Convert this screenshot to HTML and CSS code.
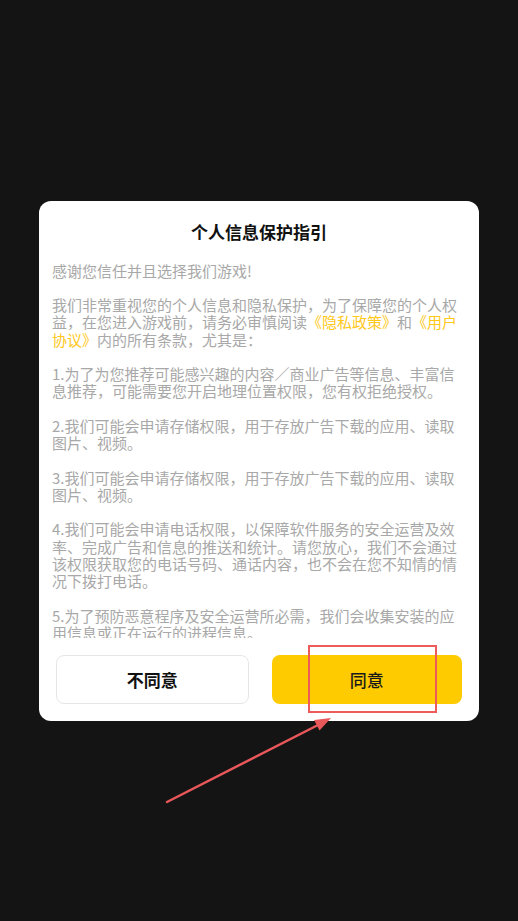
FILE: index.html
```html
<!DOCTYPE html>
<html lang="zh-CN">
<head>
    <meta charset="utf-8">
    <title>个人信息保护指引</title>
    <link rel="stylesheet" href="styles.css">
</head>
<body>
    <section class="mask">
        <div class="dialog">
            <h2 class="dialog-title">个人信息保护指引</h2>
            <div class="dialog-body">
                <p>感谢您信任并且选择我们游戏!</p>
                <p>我们非常重视您的个人信息和隐私保护，为了保障您的个人权益，在您进入游戏前，请务必审慎阅读<a class="link">《隐私政策》</a>和<a class="link">《用户协议》</a>内的所有条款，尤其是：</p>
                <p>1.为了为您推荐可能感兴趣的内容／商业广告等信息、丰富信息推荐，可能需要您开启地理位置权限，您有权拒绝授权。</p>
                <p>2.我们可能会申请存储权限，用于存放广告下载的应用、读取图片、视频。</p>
                <p>3.我们可能会申请存储权限，用于存放广告下载的应用、读取图片、视频。</p>
                <p>4.我们可能会申请电话权限，以保障软件服务的安全运营及效率、完成广告和信息的推送和统计。请您放心，我们不会通过该权限获取您的电话号码、通话内容，也不会在您不知情的情况下拨打电话。</p>
                <p>5.为了预防恶意程序及安全运营所必需，我们会收集安装的应用信息或正在运行的进程信息。</p>
            </div>
            <div class="dialog-footer">
                <button class="btn btn-cancel">不同意</button>
                <button class="btn btn-ok">同意</button>
            </div>
        </div>
    </section>

    <!-- annotation drawn over the screenshot -->
    <div class="mark-box"></div>
    <svg class="mark-arrow" width="518" height="921" viewBox="0 0 518 921">
        <line x1="167" y1="802" x2="320" y2="724" stroke="#e8575a" stroke-width="2.5" stroke-linecap="round"/>
        <polygon points="331,718 319.5,730.6 314.1,720" fill="#e8575a"/>
    </svg>
</body>
</html>
```

FILE: styles.css
```css
html, body {
    margin: 0;
    padding: 0;
}

body {
    background: #141414;
    font-family: "Noto Sans CJK SC", "Noto Sans", sans-serif;
    position: relative;
}

.mask {
    height: 921px;
    display: flex;
    align-items: center;
    justify-content: center;
}

.dialog {
    width: 440px;
    height: 520px;
    background: #fff;
    border-radius: 12px;
    display: flex;
    flex-direction: column;
    box-sizing: border-box;
    padding-top: 19px;
}

.dialog-title {
    margin: 0;
    font-size: 17px;
    line-height: 24px;
    font-weight: bold;
    color: #111;
    text-align: center;
}

.dialog-body {
    margin-top: 18px;
    height: 376px;
    overflow: hidden;
    padding: 0 16px 0 13px;
    font-size: 15px;
    line-height: 17.25px;
    color: #a8a8a8;
}

.dialog-body p {
    margin: 0 0 17.25px 0;
}

.link {
    color: #ffc81a;
}

.dialog-footer {
    display: flex;
    gap: 23px;
    padding: 17px 17px 0 17px;
}

.btn {
    flex: 1;
    height: 49px;
    border-radius: 8px;
    font-family: "Noto Sans CJK SC", sans-serif;
    font-size: 17px;
    font-weight: bold;
    color: #111;
    box-sizing: border-box;
}

.btn-cancel {
    background: #fff;
    border: 1px solid #e6e6e6;
}

.btn-ok {
    background: #fecb00;
    border: none;
    font-weight: 500;
    color: #1a1a1a;
}

.mark-box {
    position: absolute;
    left: 308px;
    top: 645px;
    width: 129px;
    height: 68px;
    border: 2px solid #ee5b5b;
    box-sizing: border-box;
}

.mark-arrow {
    position: absolute;
    left: 0;
    top: 0;
    pointer-events: none;
}
```
